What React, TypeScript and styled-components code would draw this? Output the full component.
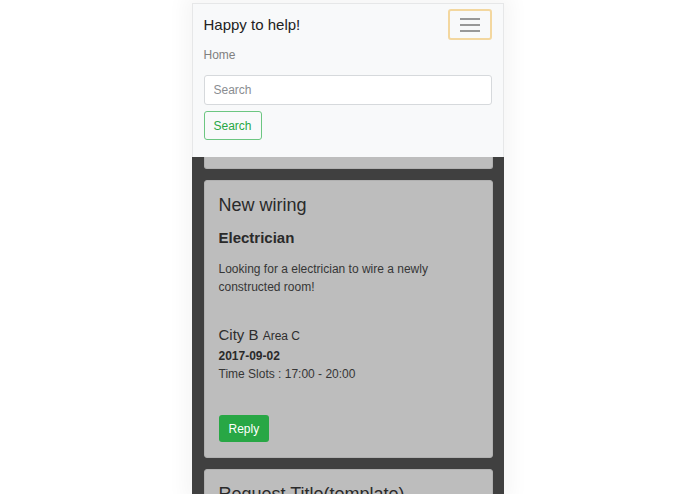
import styled, { createGlobalStyle } from "styled-components";

const GlobalStyle = createGlobalStyle`
  html, body {
    margin: 0;
    padding: 0;
    background: #ffffff;
    font-family: "Liberation Sans", Arial, sans-serif;
    color: #212529;
  }
`

const Phone = styled.div`
  width: 312px;
  margin: 3px auto 0;
  height: 491px;
  overflow: hidden;
  background: #404040;
  box-shadow: 0 0 18px 8px rgba(0, 0, 0, 0.04);
`

const Navbar = styled.nav`
  background: #f8f9fa;
  border: 1px solid #e6e7e8;
  border-bottom: none;
  padding: 5px 11px 17px;
  display: flex;
  flex-direction: column;
`

const TopRow = styled.div`
  display: flex;
  justify-content: space-between;
  align-items: center;
`

const Brand = styled.a`
  font-size: 15px;
  line-height: 22px;
  padding: 4px 0;
  color: #222;
`

const Toggler = styled.button`
  width: 44px;
  height: 31px;
  border: 2px solid #f3d79f;
  border-radius: 3px;
  background: transparent;
  display: flex;
  align-items: center;
  justify-content: center;
  padding: 0;
`

const NavLink = styled.a`
  font-size: 12px;
  line-height: 18px;
  padding: 6px 0;
  color: #808080;
`

const SearchInput = styled.input`
  margin-top: 5px;
  height: 30px;
  box-sizing: border-box;
  border: 1px solid #d6d9dc;
  border-radius: 3px;
  padding: 0 9px;
  font-family: inherit;
  font-size: 12px;
  background: #fff;
  &::placeholder { color: #8a8d91; }
`

const OutlineButton = styled.button`
  align-self: flex-start;
  margin-top: 6px;
  height: 29px;
  padding: 0 9px;
  border: 1px solid #6cc681;
  border-radius: 3px;
  background: transparent;
  color: #28a745;
  font-family: inherit;
  font-size: 12px;
`

const Feed = styled.div`
  padding: 0 11px 0 12px;
  display: flex;
  flex-direction: column;
  gap: 11px;
`

const Card = styled.div<{ $stub?: boolean }>`
  background: #bdbdbd;
  border: 1px solid #b0b0b0;
  border-radius: 3px;
  ${p => p.$stub && `
    height: 11px;
    border-top: none;
    border-radius: 0 0 3px 3px;
  `}
`

const CardBody = styled.div`
  padding: 13px 14px 15px;
  display: flex;
  flex-direction: column;
`

const Title = styled.h4`
  margin: 0 0 11px;
  font-size: 18px;
  line-height: 22px;
  font-weight: 400;
  color: #2a2a2a;
`

const Trade = styled.h5`
  margin: 0 0 11px;
  font-size: 15px;
  line-height: 22px;
  font-weight: 700;
  color: #2a2a2a;
`

const Text = styled.p`
  margin: 0;
  font-size: 12px;
  line-height: 18px;
  color: #363636;
`

const Place = styled.div`
  margin-top: 28px;
  font-size: 15px;
  line-height: 22px;
  color: #2e2e2e;
  small { font-size: 12px; }
`

const DateLine = styled(Text)`
  font-weight: 700;
  color: #2a2a2a;
`

const ReplyButton = styled.button`
  align-self: flex-start;
  margin-top: 32px;
  height: 27px;
  padding: 0 10px;
  border: none;
  border-radius: 3px;
  background: #28a745;
  color: #fff;
  font-family: inherit;
  font-size: 12px;
`

const Hamburger = () => (
  <svg width="20" height="16" viewBox="0 0 20 16">
    <g stroke="#7f7f7f" strokeWidth="1.6">
      <line x1="0" y1="2" x2="20" y2="2" />
      <line x1="0" y1="8" x2="20" y2="8" />
      <line x1="0" y1="14" x2="20" y2="14" />
    </g>
  </svg>
)

const App = () => (
  <>
    <GlobalStyle />
    <Phone>
      <Navbar>
        <TopRow>
          <Brand>Happy to help!</Brand>
          <Toggler><Hamburger /></Toggler>
        </TopRow>
        <NavLink>Home</NavLink>
        <SearchInput placeholder="Search" />
        <OutlineButton>Search</OutlineButton>
      </Navbar>
      <Feed>
        <Card $stub />
        <Card>
          <CardBody>
            <Title>New wiring</Title>
            <Trade>Electrician</Trade>
            <Text>Looking for a electrician to wire a newly constructed room!</Text>
            <Place>City B <small>Area C</small></Place>
            <DateLine>2017-09-02</DateLine>
            <Text>Time Slots : 17:00 - 20:00</Text>
            <ReplyButton>Reply</ReplyButton>
          </CardBody>
        </Card>
        <Card>
          <CardBody>
            <Title>Request Title(template)</Title>
          </CardBody>
        </Card>
      </Feed>
    </Phone>
  </>
)

export default App;
